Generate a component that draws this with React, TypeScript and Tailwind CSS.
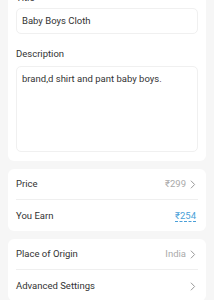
import React from "react";

const Chevron = () => (
  <svg width="6" height="9" viewBox="0 0 6 9" className="ml-[4px]">
    <path d="M1.2 1 L4.6 4.5 L1.2 8" fill="none" stroke="#9a9a9a" strokeWidth="1" strokeLinecap="round" strokeLinejoin="round" />
  </svg>
);

const Row = ({ label, right, divider }: { label: string; right?: React.ReactNode; divider?: boolean }) => (
  <div className="px-[8px]">
    <div className={`flex h-[31px] items-center justify-between pt-[1px] ${divider ? "border-b border-[#efefef]" : ""}`}>
      <span className="text-[9.5px] text-[#333]">{label}</span>
      <div className="mr-[2px] flex items-center">{right}</div>
    </div>
  </div>
);

export default function App() {
  return (
    <div className="h-[300px] w-[214px] overflow-hidden bg-[#f6f6f6]" style={{ fontFamily: "Roboto, 'Noto Sans', sans-serif" }}>
      <div className="mt-[-16px] flex flex-col gap-[8px] px-[8px]">
        <div className="rounded-[6px] bg-white px-[8px] pb-[9px] pt-[8px]">
          <div className="h-[12px] text-[9.5px] leading-[12px] text-[#333]">Title</div>
          <div className="mt-[4px] flex h-[26px] items-center rounded-[5px] border border-[#f0f0f0] px-[5px] text-[9.5px] text-[#333]">
            Baby Boys Cloth
          </div>
          <div className="mt-[14px] h-[12px] text-[9.5px] leading-[12px] text-[#333]">Description</div>
          <div className="mt-[6px] h-[86px] rounded-[5px] border border-[#f0f0f0] px-[5px] pt-[6px] text-[9.5px] leading-[12px] text-[#333]">
            brand,d shirt and pant baby boys.
          </div>
        </div>
        <div className="rounded-[6px] bg-white">
          <Row
            label="Price"
            divider
            right={
              <>
                <span className="text-[9.5px] text-[#aaa]">₹299</span>
                <Chevron />
              </>
            }
          />
          <Row
            label="You Earn"
            right={
              <span className="border-b border-dashed border-[#4a9fd8] text-[9.5px] leading-[10px] text-[#4a9fd8]">₹254</span>
            }
          />
        </div>
        <div className="rounded-[6px] bg-white">
          <Row
            label="Place of Origin"
            divider
            right={
              <>
                <span className="text-[9.5px] text-[#aaa]">India</span>
                <Chevron />
              </>
            }
          />
          <Row label="Advanced Settings" right={<Chevron />} />
        </div>
      </div>
    </div>
  );
}
